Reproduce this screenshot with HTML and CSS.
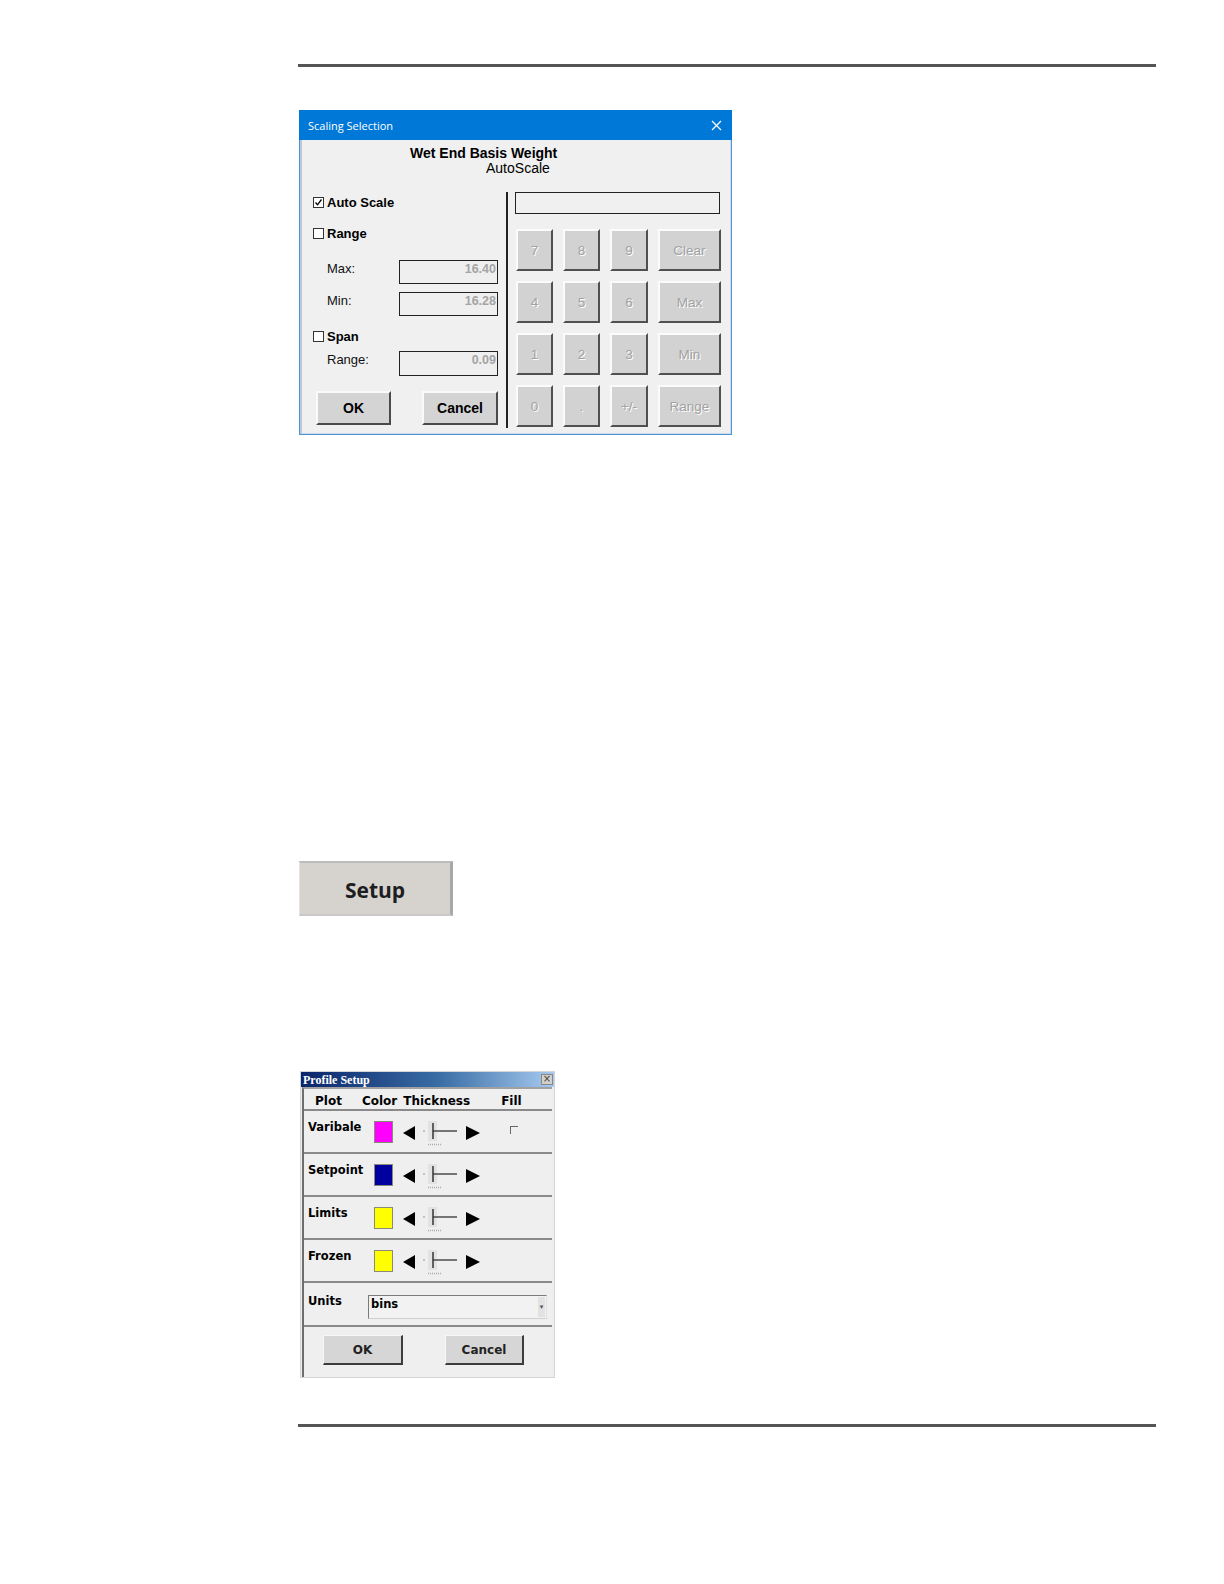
FILE: index.html
```html
<!DOCTYPE html>
<html>
<head>
<meta charset="utf-8">
<meta name="viewport" content="width=1224">
<link rel="stylesheet" href="styles.css">
</head>
<body>
<div class="page">
  <div class="rule"></div>

  <div class="dlg">
    <div class="dlg-title">
      <span class="dlg-title-text">Scaling Selection</span>
      <svg class="dlg-close" width="11" height="11" viewBox="0 0 11 11"><path d="M1 1L10 10M10 1L1 10" stroke="#fff" stroke-width="1.2"/></svg>
    </div>
    <div class="dlg-body">
      <div class="dlg-head">
        <div class="h1">Wet End Basis Weight</div>
        <div class="h2">AutoScale</div>
      </div>
      <div class="dlg-main">
        <div class="left">
          <div class="cb-row r-auto"><span class="cb checked"><svg width="9" height="9" viewBox="0 0 9 9"><path d="M1.5 4.5L3.5 6.8L7.5 1.5" fill="none" stroke="#000" stroke-width="1.3"/></svg></span><span class="cb-label">Auto Scale</span></div>
          <div class="cb-row r-range"><span class="cb"></span><span class="cb-label">Range</span></div>
          <div class="field-row r-max"><span class="f-label">Max:</span><span class="f-box">16.40</span></div>
          <div class="field-row r-min"><span class="f-label">Min:</span><span class="f-box">16.28</span></div>
          <div class="cb-row r-span"><span class="cb"></span><span class="cb-label">Span</span></div>
          <div class="field-row r-rng"><span class="f-label">Range:</span><span class="f-box tall">0.09</span></div>
          <div class="btn-row">
            <span class="btn ok">OK</span>
            <span class="btn cancel">Cancel</span>
          </div>
        </div>
        <div class="sep"></div>
        <div class="right">
          <div class="display"></div>
          <div class="keypad">
            <span class="key">7</span><span class="key">8</span><span class="key">9</span><span class="key">Clear</span>
            <span class="key">4</span><span class="key">5</span><span class="key">6</span><span class="key">Max</span>
            <span class="key">1</span><span class="key">2</span><span class="key">3</span><span class="key">Min</span>
            <span class="key">0</span><span class="key">.</span><span class="key">+/-</span><span class="key">Range</span>
          </div>
        </div>
      </div>
    </div>
  </div>

  <div class="setup">Setup</div>

  <div class="pdlg">
    <div class="p-title">
      <span class="p-title-text">Profile Setup</span>
      <span class="p-close">×</span>
    </div>
    <div class="p-content">
      <div class="p-head">
        <span class="ph-plot">Plot</span>
        <span class="ph-color">Color</span>
        <span class="ph-thick">Thickness</span>
        <span class="ph-fill">Fill</span>
      </div>

      <div class="p-row">
        <span class="p-label">Varibale</span>
        <span class="swatch sw-mag"></span>
        <svg class="arr" width="13" height="14" viewBox="0 0 13 14"><path d="M0 7L12 0V14Z" fill="#000"/></svg>
        <svg class="slider" width="36" height="26" viewBox="0 0 36 26"><circle cx="2" cy="11" r="0.8" fill="#888"/><rect x="6" y="1" width="9" height="20" fill="#e2e2e2"/><path d="M11 3V19" stroke="#333" stroke-width="1.5"/><path d="M11 11H35" stroke="#333" stroke-width="1.3"/><path d="M6 24.5H20" stroke="#aaa" stroke-width="1.5" stroke-dasharray="1 1"/></svg>
        <svg class="arr arr-r" width="14" height="14" viewBox="0 0 14 14"><path d="M14 7L0 0V14Z" fill="#000"/></svg>
        <span class="fill-cb"></span>
      </div>

      <div class="p-row">
        <span class="p-label">Setpoint</span>
        <span class="swatch sw-blue"></span>
        <svg class="arr" width="13" height="14" viewBox="0 0 13 14"><path d="M0 7L12 0V14Z" fill="#000"/></svg>
        <svg class="slider" width="36" height="26" viewBox="0 0 36 26"><circle cx="2" cy="11" r="0.8" fill="#888"/><rect x="6" y="1" width="9" height="20" fill="#e2e2e2"/><path d="M11 3V19" stroke="#333" stroke-width="1.5"/><path d="M11 11H35" stroke="#333" stroke-width="1.3"/><path d="M6 24.5H20" stroke="#aaa" stroke-width="1.5" stroke-dasharray="1 1"/></svg>
        <svg class="arr arr-r" width="14" height="14" viewBox="0 0 14 14"><path d="M14 7L0 0V14Z" fill="#000"/></svg>
      </div>

      <div class="p-row">
        <span class="p-label">Limits</span>
        <span class="swatch sw-yel"></span>
        <svg class="arr" width="13" height="14" viewBox="0 0 13 14"><path d="M0 7L12 0V14Z" fill="#000"/></svg>
        <svg class="slider" width="36" height="26" viewBox="0 0 36 26"><circle cx="2" cy="11" r="0.8" fill="#888"/><rect x="6" y="1" width="9" height="20" fill="#e2e2e2"/><path d="M11 3V19" stroke="#333" stroke-width="1.5"/><path d="M11 11H35" stroke="#333" stroke-width="1.3"/><path d="M6 24.5H20" stroke="#aaa" stroke-width="1.5" stroke-dasharray="1 1"/></svg>
        <svg class="arr arr-r" width="14" height="14" viewBox="0 0 14 14"><path d="M14 7L0 0V14Z" fill="#000"/></svg>
      </div>

      <div class="p-row">
        <span class="p-label">Frozen</span>
        <span class="swatch sw-yel"></span>
        <svg class="arr" width="13" height="14" viewBox="0 0 13 14"><path d="M0 7L12 0V14Z" fill="#000"/></svg>
        <svg class="slider" width="36" height="26" viewBox="0 0 36 26"><circle cx="2" cy="11" r="0.8" fill="#888"/><rect x="6" y="1" width="9" height="20" fill="#e2e2e2"/><path d="M11 3V19" stroke="#333" stroke-width="1.5"/><path d="M11 11H35" stroke="#333" stroke-width="1.3"/><path d="M6 24.5H20" stroke="#aaa" stroke-width="1.5" stroke-dasharray="1 1"/></svg>
        <svg class="arr arr-r" width="14" height="14" viewBox="0 0 14 14"><path d="M14 7L0 0V14Z" fill="#000"/></svg>
      </div>

      <div class="p-units">
        <span class="u-label">Units</span>
        <span class="u-select"><span class="u-text">bins</span><span class="u-drop">▾</span></span>
      </div>

      <div class="p-btns">
        <span class="pbtn p-ok">OK</span>
        <span class="pbtn p-cancel">Cancel</span>
      </div>
    </div>
  </div>

  <div class="rule bottom"></div>
</div>
</body>
</html>
```

FILE: styles.css
```css
* { box-sizing: border-box; }
html { overflow: hidden; }
html, body { margin: 0; padding: 0; background: #fff; }
body { font-family: "Liberation Sans", Arial, sans-serif; color: #000; }

.page {
  padding: 64px 0 40px 298px;
}

.rule {
  width: 858px;
  height: 3px;
  background: #555;
}
.rule.bottom { margin-top: 46px; }

/* ---------- Scaling Selection dialog ---------- */
.dlg {
  width: 433px;
  height: 325px;
  margin: 43px 0 0 1px;
  display: flex;
  flex-direction: column;
}
.dlg-title {
  height: 30px;
  background: #0078d7;
  display: flex;
  align-items: center;
  justify-content: space-between;
  padding: 0 10px 0 9px;
  flex: none;
}
.dlg-title-text {
  color: #fff;
  font-family: "Open Sans", "DejaVu Sans", sans-serif;
  font-size: 11px;
}
.dlg-close { display: block; }
.dlg-body {
  flex: 1;
  background: #f0f0f0;
  border: 1px solid #4a94dc;
  border-top: none;
  box-shadow: inset 2px 0 0 #b9c9da, inset -1px -1px 0 #d0dbe6;
  display: flex;
  flex-direction: column;
}
.dlg-head {
  padding-top: 6px;
  font-size: 14px;
  line-height: 15px;
}
.dlg-head .h1 { margin-left: 110px; font-weight: bold; }
.dlg-head .h2 { margin-left: 186px; }

.dlg-main {
  margin-top: 16px;
  display: flex;
  height: 237px;
}
.left {
  width: 206px;
  display: flex;
  flex-direction: column;
}
.sep {
  width: 2px;
  background: #222;
  height: 236px;
}
.right {
  margin-left: 7px;
  width: 206px;
}

.cb-row {
  height: 20px;
  display: flex;
  align-items: center;
  padding-left: 13px;
}
.r-range { margin-top: 11px; }
.r-span { margin-top: 10px; }
.cb {
  width: 11px;
  height: 11px;
  border: 1px solid #333;
  background: #fff;
  display: flex;
  align-items: center;
  justify-content: center;
  margin-right: 3px;
}
.cb svg { display: block; }
.cb-label { font-weight: bold; font-size: 13px; }

.field-row {
  display: flex;
  align-items: center;
  padding-left: 27px;
}
.r-max { margin-top: 17px; }
.r-min { margin-top: 8px; }
.r-rng { margin-top: 5px; }
.f-label {
  width: 72px;
  font-size: 13px;
  color: #111;
  align-self: flex-start;
  padding-top: 1px;
}
.f-box {
  width: 99px;
  height: 24px;
  border: 1px solid #222;
  background: #efefef;
  color: #a4a4a4;
  font-weight: bold;
  font-size: 12.5px;
  text-align: right;
  padding: 1px 1px 0 0;
}
.f-box.tall { height: 25px; }

.btn-row {
  margin-top: 15px;
  display: flex;
  padding-left: 16px;
}
.btn {
  height: 34px;
  background: #d4d4d4;
  border-top: 2px solid #fafafa;
  border-left: 2px solid #fafafa;
  border-right: 2px solid #4a4a4a;
  border-bottom: 2px solid #4a4a4a;
  font-weight: bold;
  font-size: 14px;
  display: flex;
  align-items: center;
  justify-content: center;
}
.btn.ok { width: 75px; }
.btn.cancel { width: 76px; margin-left: 31px; }

.display {
  width: 205px;
  height: 22px;
  border: 1px solid #222;
  background: #f0f0f0;
}
.keypad {
  margin: 15px 0 0 1px;
  display: grid;
  grid-template-columns: 37px 37px 38px 63px;
  grid-auto-rows: 42px;
  column-gap: 10px;
  row-gap: 10px;
}
.key {
  background: #d2d2d2;
  border-top: 2px solid #fbfbfb;
  border-left: 2px solid #fbfbfb;
  border-right: 2px solid #505050;
  border-bottom: 2px solid #505050;
  color: #a2a2a2;
  text-shadow: 1px 1px 0 #fff;
  font-size: 13.5px;
  display: flex;
  align-items: center;
  justify-content: center;
}

/* ---------- Setup button ---------- */
.setup {
  width: 154px;
  height: 55px;
  margin: 426px 0 0 1px;
  background: #d6d3ce;
  border-top: 2px solid #bcbcbc;
  border-left: 1px solid #e4e4e4;
  border-right: 3px solid #a8a8a8;
  border-bottom: 2px solid #c8c8c8;
  font-family: "Open Sans", "Liberation Sans", sans-serif;
  font-weight: 700;
  font-size: 21px;
  color: #1e1e1e;
  display: flex;
  align-items: center;
  justify-content: center;
  padding-top: 2px;
}

/* ---------- Profile Setup dialog ---------- */
.pdlg {
  width: 255px;
  height: 307px;
  margin: 155px 0 0 2px;
  background: #efefef;
  border: 1px solid #d4d4d4;
  display: flex;
  flex-direction: column;
  font-family: "DejaVu Sans", Verdana, sans-serif;
}
.p-title {
  height: 15px;
  flex: none;
  background: linear-gradient(90deg, #0a246a 0%, #3a6ea5 55%, #a6caf0 100%);
  display: flex;
  align-items: center;
  justify-content: space-between;
  padding: 0 1px 0 2px;
}
.p-title-text {
  color: #fff;
  font-family: "Liberation Serif", "Times New Roman", serif;
  font-weight: bold;
  font-size: 12px;
  line-height: 14px;
}
.p-close {
  width: 12px;
  height: 11px;
  background: #d4d0c8;
  border: 1px solid #888;
  font-size: 10px;
  line-height: 8px;
  text-align: center;
  color: #444;
}
.p-content {
  flex: 1;
  margin-left: 1px;
  width: 250px;
  border-left: 2px solid #6e6e6e;
  border-top: 2px solid #a0a0a0;
  display: flex;
  flex-direction: column;
}
.p-head {
  height: 22px;
  font-weight: bold;
  font-size: 12px;
  line-height: 14px;
  border-bottom: 2px solid #8a8a8a;
  display: flex;
  align-items: flex-end;
  padding-bottom: 1px;
}
.ph-plot { margin-left: 11px; }
.ph-color { margin-left: 20px; }
.ph-thick { margin-left: 6px; }
.ph-fill { margin-left: 31px; }

.p-row {
  height: 43px;
  border-bottom: 2px solid #8a8a8a;
  display: flex;
  align-items: flex-start;
  padding: 9px 0 0 4px;
}
.p-label {
  width: 66px;
  font-weight: bold;
  font-size: 11.5px;
  line-height: 14px;
}
.swatch {
  width: 19px;
  height: 22px;
  border: 1px solid #8a8a7a;
  margin-right: 10px;
  margin-top: 1px;
}
.sw-mag { background: #ff00ff; }
.sw-blue { background: #00009e; }
.sw-yel { background: #ffff00; }
.arr { display: block; margin-top: 6px; flex: none; }
.slider { display: block; margin: 0 0 0 6px; flex: none; }
.arr-r { margin-left: 8px; }
.fill-cb {
  width: 8px;
  height: 8px;
  border-top: 1px solid #666;
  border-left: 1px solid #666;
  margin: 6px 0 0 30px;
}

.p-units {
  height: 44px;
  border-bottom: 2px solid #8a8a8a;
  display: flex;
  align-items: flex-start;
  padding: 11px 0 0 4px;
}
.u-label {
  width: 60px;
  font-weight: bold;
  font-size: 11.5px;
  line-height: 14px;
}
.u-select {
  width: 179px;
  height: 24px;
  margin-top: 1px;
  background: #f2f2f2;
  border-top: 1px solid #7a7a7a;
  border-left: 1px solid #7a7a7a;
  border-right: 1px solid #e0e0e0;
  border-bottom: 1px solid #d0d0d0;
  display: flex;
  justify-content: space-between;
  align-items: flex-start;
}
.u-text {
  font-weight: bold;
  font-size: 11.5px;
  line-height: 14px;
  padding: 1px 0 0 2px;
}
.u-drop {
  width: 7px;
  height: 20px;
  margin: 1px 1px 0 0;
  background: #e2e2e2;
  font-size: 7px;
  line-height: 20px;
  text-align: center;
  color: #555;
}

.p-btns {
  display: flex;
  padding: 8px 0 0 19px;
}
.pbtn {
  height: 30px;
  background: #d6d6d6;
  border-top: 1px solid #f6f6f6;
  border-left: 1px solid #f6f6f6;
  border-right: 2px solid #3c3c3c;
  border-bottom: 2px solid #3c3c3c;
  font-weight: bold;
  font-size: 12px;
  color: #222;
  display: flex;
  align-items: center;
  justify-content: center;
}
.p-ok { width: 80px; }
.p-cancel { width: 79px; margin-left: 42px; }
```
